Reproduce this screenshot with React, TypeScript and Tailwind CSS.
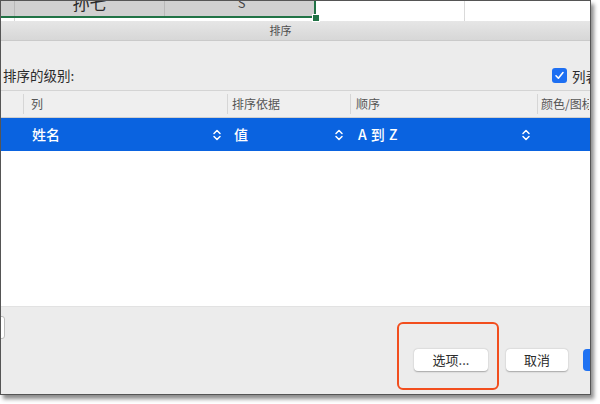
import React from "react";

function Chevrons() {
  return (
    <svg width="10" height="14" viewBox="0 0 10 14" fill="none">
      <path d="M2 5.5 L5 2.5 L8 5.5" stroke="white" strokeWidth="1.5" strokeLinecap="round" strokeLinejoin="round" />
      <path d="M2 8.5 L5 11.5 L8 8.5" stroke="white" strokeWidth="1.5" strokeLinecap="round" strokeLinejoin="round" />
    </svg>
  );
}

export default function App() {
  return (
    <div className="w-[600px] h-[404px] bg-white relative overflow-hidden font-['Noto_Sans_CJK_SC','Noto_Sans',sans-serif]">
      <div className="w-[591px] h-[395px] border border-[#555555] shadow-[3px_4px_4px_rgba(0,0,0,0.45)] flex flex-col overflow-hidden bg-[#ececec] relative">
        {/* spreadsheet strip */}
        <div className="h-[20px] flex flex-col bg-white shrink-0">
          <div className="h-[17px] flex shrink-0">
            <div className="w-[315px] h-[17px] bg-[#d0d0d0] border-b-2 border-r-2 border-[#217346] flex overflow-hidden shrink-0">
              <div className="w-[14px] border-r border-[#b9b9b9] shrink-0" />
              <div className="w-[150px] border-r border-[#b9b9b9] flex justify-center overflow-hidden shrink-0">
                <span className="text-[17px] leading-[20px] -mt-[8px] text-[#2a2a2a] whitespace-nowrap">孙七</span>
              </div>
              <div className="flex-1 flex justify-center overflow-hidden">
                <span className="text-[13px] leading-[16px] -mt-[6px] text-[#444] pl-[4px]">S</span>
              </div>
            </div>
            <div className="w-[149px] border-r border-[#dadada] shrink-0" />
            <div className="flex-1" />
          </div>
          <div className="flex-1 flex">
            <div className="w-[14px] border-r border-[#d8d8d8] shrink-0" />
            <div className="w-[450px] border-r border-[#d8d8d8] shrink-0" />
          </div>
        </div>
        {/* selection handle */}
        <div className="absolute left-[311px] top-[13px] w-[6px] h-[6px] bg-[#217346] border border-white box-content" />

        {/* title bar */}
        <div className="h-[20px] shrink-0 bg-gradient-to-b from-[#e6e6e6] to-[#d7d7d7] border-b border-[#cacaca] flex items-center justify-center pr-[30px]">
          <span className="text-[11px] text-[#4f4f4f] leading-none">排序</span>
        </div>

        {/* body */}
        <div className="flex-1 flex flex-col">
          <div className="h-[49px] shrink-0 flex items-end pb-[7px] pl-[2px]">
            <div className="flex-1 flex items-center h-[18px] -mb-[1px]">
              <span className="text-[13.5px] text-[#2b2b2b] leading-[18px] whitespace-nowrap">排序的级别:</span>
              <div className="flex-1" />
              <div className="w-[15px] h-[15px] rounded-[3px] bg-[#1d6ff2] flex items-center justify-center shrink-0">
                <svg width="11" height="11" viewBox="0 0 11 11" fill="none">
                  <path d="M2 5.8 L4.4 8.2 L9 2.6" stroke="white" strokeWidth="1.6" strokeLinecap="round" strokeLinejoin="round" />
                </svg>
              </div>
              <div className="ml-[5px] w-[18px] overflow-hidden shrink-0">
                <span className="text-[13.5px] text-[#2b2b2b] whitespace-nowrap">列表</span>
              </div>
            </div>
          </div>

          {/* table */}
          <div className="flex-1 flex flex-col bg-white border-t border-[#d4d4d4]">
            <div className="h-[27px] shrink-0 bg-[#efefef] border-b border-[#cfcfcf] flex items-center text-[12px] text-[#555] whitespace-nowrap">
              <div className="w-[22px] h-[20px] shrink-0" />
              <div className="w-[204px] h-[20px] border-l border-[#d6d6d6] pl-[7px] flex items-center shrink-0">列</div>
              <div className="w-[123px] h-[20px] border-l border-[#d6d6d6] pl-[4px] flex items-center shrink-0">排序依据</div>
              <div className="w-[187px] h-[20px] border-l border-[#d6d6d6] pl-[5px] flex items-center shrink-0">顺序</div>
              <div className="flex-1 h-[20px] border-l border-[#d6d6d6] pl-[3px] flex items-center overflow-hidden">
                <span className="w-[48px] overflow-hidden">颜色/图标</span>
              </div>
            </div>
            <div className="h-[33px] shrink-0 bg-[#0a63e0] flex items-center text-[14px] text-white font-medium whitespace-nowrap">
              <div className="w-[23px] shrink-0" />
              <div className="w-[204px] pl-[8px] pr-[6px] flex items-center justify-between shrink-0">
                <span>姓名</span>
                <Chevrons />
              </div>
              <div className="w-[123px] pl-[6px] pr-[7px] flex items-center justify-between shrink-0">
                <span>值</span>
                <Chevrons />
              </div>
              <div className="w-[187px] pl-[7px] pr-[7px] flex items-center justify-between shrink-0">
                <span className="tracking-[0.5px]">A 到 Z</span>
                <Chevrons />
              </div>
              <div className="flex-1" />
            </div>
            <div className="flex-1" />
          </div>

          {/* bottom buttons */}
          <div className="h-[88px] shrink-0 bg-[#ececec] border-t border-[#e2e2e2] flex flex-col overflow-hidden">
            <div className="h-[9px] shrink-0" />
            <div className="w-[20px] h-[23px] -ml-[16px] bg-white border border-[#bdbdbd] rounded-[3px] shrink-0" />
            <div className="h-[10px] shrink-0" />
            <div className="flex items-center">
              <div className="w-[413px] shrink-0" />
              <div className="w-[74px] h-[22px] bg-white rounded-[4px] shadow-[0_0.5px_1.5px_rgba(0,0,0,0.3)] flex items-center justify-center text-[13px] text-[#2b2b2b] shrink-0">选项...</div>
              <div className="w-[18px] shrink-0" />
              <div className="w-[62px] h-[22px] bg-white rounded-[4px] shadow-[0_0.5px_1.5px_rgba(0,0,0,0.3)] flex items-center justify-center text-[13px] text-[#2b2b2b] shrink-0">取消</div>
              <div className="w-[15px] shrink-0" />
              <div className="w-[60px] h-[22px] bg-[#1f72f2] rounded-[4px] shrink-0" />
            </div>
          </div>
        </div>
      </div>
      {/* orange annotation */}
      <div className="absolute left-[397px] top-[322px] w-[102px] h-[68px] border-2 border-[#f24e1e] rounded-[6px]" />
    </div>
  );
}
